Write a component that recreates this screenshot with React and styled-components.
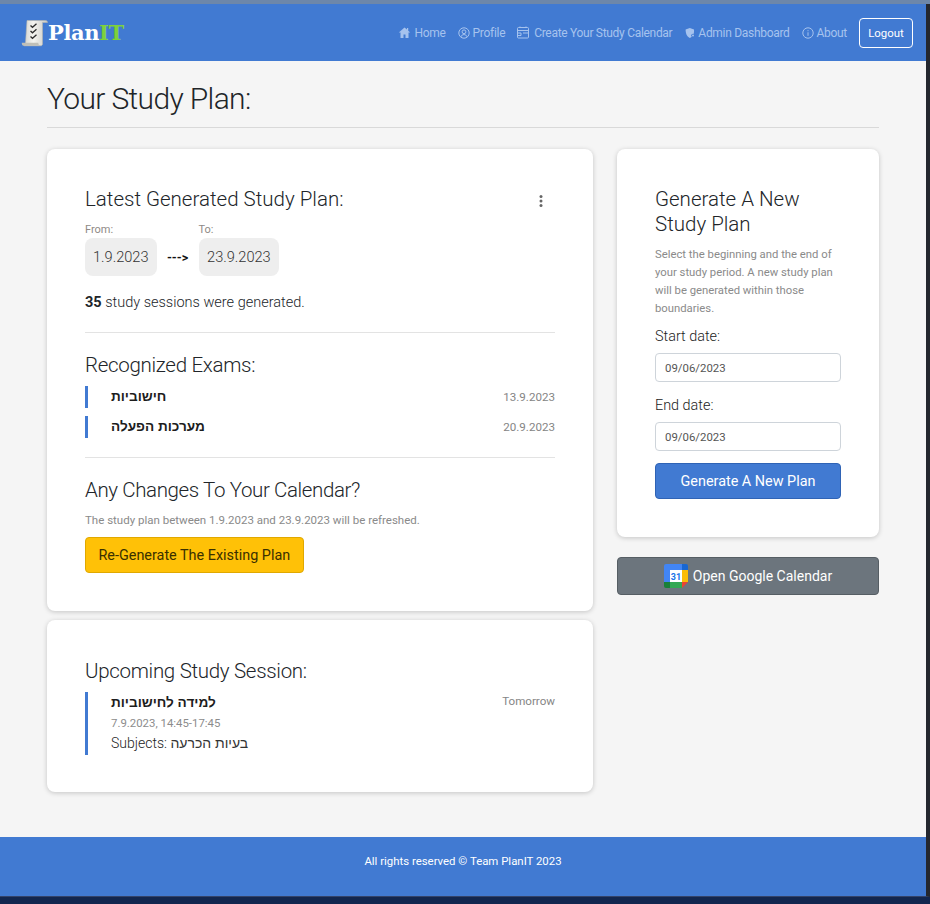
import React from "react";
import styled, { createGlobalStyle } from "styled-components";

const Global = createGlobalStyle`
  html, body { margin: 0; padding: 0; background: #12264f; }
  body { font-family: "Roboto", "Noto Sans", "Liberation Sans", sans-serif; font-weight: 300; color: #212529; }
  * { box-sizing: border-box; }
`;

const Frame = styled.div`
  width: 930px; height: 904px; display: flex; flex-direction: column; overflow: hidden;
  background: #12264f; border-top: 4px solid #6d87aa;
`;
const Window = styled.div`
  width: 930px; height: 893px; background: #f5f5f5; display: flex; flex-direction: column;
  border-right: 4px solid #24272f; border-bottom: 1px solid #33436a;
`;
const Nav = styled.nav`
  height: 57px; flex: none; background: #417ad2; display: flex; align-items: center;
  padding: 0 13px 0 21px; justify-content: space-between;
`;
const Brand = styled.div`display: flex; align-items: center; gap: 0;`;
const BrandText = styled.span`
  font-family: "DejaVu Serif", "Liberation Serif", serif; font-weight: 700; font-size: 21px;
  letter-spacing: -0.4px; color: #fff;
  b { color: #7ed13c; font-weight: 700; }
`;
const Links = styled.div`display: flex; align-items: center;`;
const NavLink = styled.a`
  display: flex; align-items: center; gap: ${p => p.$iconGap || 3}px; font-size: 12px; font-weight: 400;
  color: #a6c3ee; margin-right: ${p => p.$gap || 12}px; white-space: nowrap; letter-spacing: -0.3px;
  svg { flex: none; }
`;
const LogoutButton = styled.button`
  width: 54px; height: 30px; border: 1px solid #fff; border-radius: 4px; background: transparent;
  color: #fff; font: 400 11.4px "Roboto", sans-serif; padding: 0;
`;
const Main = styled.main`flex: 1; padding: 0 47px; display: flex; flex-direction: column;`;
const PageTitle = styled.h1`
  margin: 0; height: 67px; padding-top: 17px; border-bottom: 1px solid #d9d9d9;
  font-size: 30px; font-weight: 300; line-height: 41px; letter-spacing: -0.65px;
`;
const Columns = styled.div`display: flex; gap: 24px; margin-top: 21px; align-items: flex-start;`;
const Left = styled.div`width: 546px; display: flex; flex-direction: column; gap: 9px;`;
const Right = styled.div`width: 262px; display: flex; flex-direction: column; gap: 20px;`;
const Card = styled.section`
  background: #fff; border-radius: 8px; box-shadow: 0 1px 5px rgba(0,0,0,.2);
  padding: ${p => p.$pad || "38px"}; height: ${p => p.$h}px;
`;
const TitleRow = styled.div`display: flex; justify-content: space-between; align-items: center; height: 25px;`;
const H2 = styled.h2`
  margin: 0; font-size: 20.5px; font-weight: 300; line-height: 25px; white-space: nowrap;
  letter-spacing: ${p => p.$ls || 0}px;
`;
const Kebab = styled.svg`margin-right: 8px; margin-top: 2px;`;
const Dates = styled.div`display: flex; align-items: flex-end; margin-top: 11px;`;
const DateBlock = styled.div`display: flex; flex-direction: column;`;
const SmallLabel = styled.span`font-size: 11px; line-height: 13px; color: #8f8a86; font-weight: 400; margin-bottom: 2px;`;
const DatePill = styled.span`
  height: 38px; padding: 0 ${p => p.$x}px; background: #eee; border-radius: 8px; font-size: 14.6px; font-weight: 300;
  display: flex; align-items: center; color: #333;
`;
const Arrow = styled.span`
  width: 42px; height: 38px; display: flex; align-items: center; justify-content: center;
  font: 700 12.5px "Roboto", sans-serif; color: #111;
`;
const Count = styled.p`
  margin: 18px 0 0; font-size: 14.5px; line-height: 17px; font-weight: 300;
  b { font-weight: 700; }
`;
const Rule = styled.hr`margin: ${p => p.$m}; border: 0; border-top: 1px solid #e3e3e3;`;
const ExamList = styled.div`display: flex; flex-direction: column; gap: 8px; margin-top: 8px;`;
const Item = styled.div`
  border-left: 3px solid #417ad2; padding-left: 23px; display: flex; justify-content: space-between;
  min-height: ${p => p.$h}px;
`;
const Hebrew = styled.span`
  font-family: "Liberation Sans", "DejaVu Sans", sans-serif; font-weight: 700; font-size: 13.6px; line-height: 22px; color: #1d1d1d;
`;
const Meta = styled.span`font-size: 11.6px; font-weight: 400; color: #858585; line-height: ${p => p.$lh || 22}px;`;
const Subtle = styled.p`margin: 10px 0 0; font-size: 11.5px; line-height: 14px; font-weight: 400; color: #8a8a8a;`;
const ActionButton = styled.button`
  display: block; height: ${p => p.$h || 36}px; border-radius: 4px; border: 1px solid ${p => p.$border};
  background: ${p => p.$bg}; color: ${p => p.$color}; font: 400 14.4px "Roboto", sans-serif;
  padding: 0 ${p => p.$px || 13}px; width: ${p => p.$w || "auto"}; margin-top: ${p => p.$mt || 0}px;
`;
const SessionBody = styled.div`display: flex; flex-direction: column;`;
const SessionDate = styled.span`font-size: 11.4px; font-weight: 400; color: #8c8c8c; line-height: 18px;`;
const Subjects = styled.span`
  font-size: 14px; line-height: 22px; font-weight: 300; color: #222;
  span { font-family: "Liberation Sans", sans-serif; font-weight: 400; font-size: 14px; color: #333; }
`;
const Description = styled.p`margin: 9px 0 0; font-size: 11.3px; line-height: 18px; font-weight: 400; color: #8a8a8a;`;
const FieldLabel = styled.label`display: block; font-size: 14.4px; font-weight: 300; line-height: 17px; color: #222; margin-top: ${p => p.$mt}px;`;
const DateField = styled.div`
  height: 29px; margin-top: 8px; border: 1px solid #ced4da; border-radius: 4px; padding: 0 9px; background: #fff;
  font-size: 11.4px; font-weight: 400; color: #555; display: flex; align-items: center;
`;
const GCalButton = styled.button`
  height: 38px; width: 100%; display: flex; align-items: center; justify-content: center; gap: 5px;
  background: #6c757d; border: 1px solid #565e64; border-radius: 4px; color: #fff;
  font: 400 14px "Roboto", sans-serif; padding: 0;
`;
const Footer = styled.footer`
  height: 59px; flex: none; background: #417ad2; color: #fff; text-align: center;
  font-size: 11.4px; font-weight: 400; line-height: 15px; padding-top: 17px;
`;

const Logo = () => (
  <svg width="27" height="28" viewBox="0 0 27 28">
    <defs>
      <linearGradient id="paper" x1="0" y1="0" x2="1" y2="0">
        <stop offset="0" stopColor="#d4d4cf" /><stop offset=".4" stopColor="#f4f4f0" /><stop offset="1" stopColor="#c9c9c4" />
      </linearGradient>
    </defs>
    <path d="M6 1.500h18.500c1.300 0 2 .8 2 2H21.500V25c0 1-.7 1.800-1.800 1.800H3L4.500 24z" fill="url(#paper)" stroke="#b5b5ae" strokeWidth=".6" />
    <path d="M.8 23.800h16.500c.2 1.500.6 2.500 1.500 3H2.500C1.300 26.800.7 25 .8 23.800z" fill="#bfbfb8" />
    <path d="M9.500 6.500l2 1.800 4-3.500M9.500 12l2 1.800 4-3.500M9.500 17.500l2 1.800 4-3.500" fill="none" stroke="#2d2d2d" strokeWidth="1.300" />
  </svg>
);
const icon = { fill: "none", stroke: "#a6c3ee", strokeWidth: 1 };
const HomeIcon = () => (
  <svg width="13" height="13" viewBox="0 0 13 13"><path d="M6.500 1.500L.8 6.500h1.700V12h3V8.500h2V12h3V6.500h1.700l-2-1.800V2H9v1.400z" fill="#a6c3ee" /></svg>
);
const ProfileIcon = () => (
  <svg width="12" height="12" viewBox="0 0 12 12" {...icon}><circle cx="6" cy="6" r="5.200" /><circle cx="6" cy="4.800" r="1.900" /><path d="M2.800 10c.6-1.700 1.800-2.400 3.200-2.400s2.600.7 3.200 2.400" /></svg>
);
const CalIcon = () => (
  <svg width="12" height="13" viewBox="0 0 12 13" {...icon}><rect x=".5" y="1.500" width="11" height="10.500" rx="1" /><path d="M.5 4.500h11M6 7h5.500M.5 7H4v2.500H.5M3 .5v1.500M9 .5v1.500" /></svg>
);
const ShieldIcon = () => (
  <svg width="10" height="12" viewBox="0 0 10 12"><path d="M4.800 1L9 2.500c.3 3-.2 6.800-4.200 8.500C1.500 9.500.6 6 .6 2.500z" fill="#a6c3ee" /><circle cx="8" cy="8.500" r="1.800" fill="#417ad2" /><circle cx="8" cy="8.500" r="1" fill="#a6c3ee" /></svg>
);
const InfoIcon = () => (
  <svg width="12" height="12" viewBox="0 0 12 12" {...icon}><circle cx="6" cy="6" r="5.200" /><path d="M6 5.300v3.500M6 3.200v1" /></svg>
);
const GCal = () => (
  <svg width="24" height="24" viewBox="0 0 24 24">
    <path d="M2 0h16v6H6v12H0V2a2 2 0 0 1 2-2z" fill="#4285f4" />
    <path d="M18 0h4a2 2 0 0 1 2 2v4h-6z" fill="#1967d2" />
    <path d="M18 6h6v12h-6z" fill="#fbbc04" />
    <path d="M6 18h12v6H6z" fill="#34a853" />
    <path d="M0 18h6v6H2a2 2 0 0 1-2-2z" fill="#188038" />
    <path d="M18 18h6l-6 6z" fill="#ea4335" />
    <rect x="6" y="6" width="12" height="12" fill="#fff" />
    <text x="12" y="16" textAnchor="middle" fontSize="9" fontWeight="700" fontFamily="Roboto, sans-serif" fill="#1a73e8">31</text>
  </svg>
);

export default function App() {
  return (
    <Frame>
      <Global />
      <Window>
        <Nav>
          <Brand><Logo /><BrandText>Plan<b>IT</b></BrandText></Brand>
          <Links>
            <NavLink><HomeIcon />Home</NavLink>
            <NavLink><ProfileIcon />Profile</NavLink>
            <NavLink $gap={13} $iconGap={5}><CalIcon />Create Your Study Calendar</NavLink>
            <NavLink><ShieldIcon />Admin Dashboard</NavLink>
            <NavLink><InfoIcon />About</NavLink>
            <LogoutButton>Logout</LogoutButton>
          </Links>
        </Nav>
        <Main>
          <PageTitle>Your Study Plan:</PageTitle>
          <Columns>
            <Left>
              <Card $h={462}>
                <TitleRow>
                  <H2>Latest Generated Study Plan:</H2>
                  <Kebab width="12" height="14" viewBox="0 0 12 14"><g fill="#666"><circle cx="6" cy="2.500" r="1.500" /><circle cx="6" cy="7" r="1.500" /><circle cx="6" cy="11.500" r="1.500" /></g></Kebab>
                </TitleRow>
                <Dates>
                  <DateBlock><SmallLabel>From:</SmallLabel><DatePill $x={8}>1.9.2023</DatePill></DateBlock>
                  <Arrow>---&gt;</Arrow>
                  <DateBlock><SmallLabel>To:</SmallLabel><DatePill $x={8.5}>23.9.2023</DatePill></DateBlock>
                </Dates>
                <Count><b>35</b> study sessions were generated.</Count>
                <Rule $m="21px 0 20px" />
                <H2 $ls={-0.3}>Recognized Exams:</H2>
                <ExamList>
                  <Item $h={22}><Hebrew>חישוביות</Hebrew><Meta>13.9.2023</Meta></Item>
                  <Item $h={22}><Hebrew>מערכות הפעלה</Hebrew><Meta>20.9.2023</Meta></Item>
                </ExamList>
                <Rule $m="19px 0 20px" />
                <H2 $ls={-0.38}>Any Changes To Your Calendar?</H2>
                <Subtle>The study plan between 1.9.2023 and 23.9.2023 will be refreshed.</Subtle>
                <ActionButton $bg="#ffc107" $border="#e0a800" $color="#3a3000" $mt={10} $px={12.5}>Re-Generate The Existing Plan</ActionButton>
              </Card>
              <Card $h={172} $pad="39px 38px 38px">
                <H2 $ls={-0.3}>Upcoming Study Session:</H2>
                <ExamList>
                  <Item $h={63}>
                    <SessionBody>
                      <Hebrew>למידה לחישוביות</Hebrew>
                      <SessionDate>7.9.2023, 14:45-17:45</SessionDate>
                      <Subjects>Subjects: <span>בעיות הכרעה</span></Subjects>
                    </SessionBody>
                    <Meta $lh={18}>Tomorrow</Meta>
                  </Item>
                </ExamList>
              </Card>
            </Left>
            <Right>
              <Card $h={388}>
                <H2>Generate A New<br />Study Plan</H2>
                <Description>Select the beginning and the end of your study period. A new study plan will be generated within those boundaries.</Description>
                <FieldLabel $mt={10}>Start date:</FieldLabel>
                <DateField>09/06/2023</DateField>
                <FieldLabel $mt={15}>End date:</FieldLabel>
                <DateField>09/06/2023</DateField>
                <ActionButton $bg="#417ad2" $border="#2f63b5" $color="#fff" $w="100%" $mt={12}>Generate A New Plan</ActionButton>
              </Card>
              <GCalButton><GCal />Open Google Calendar</GCalButton>
            </Right>
          </Columns>
        </Main>
        <Footer>All rights reserved © Team PlanIT 2023</Footer>
      </Window>
    </Frame>
  );
}
